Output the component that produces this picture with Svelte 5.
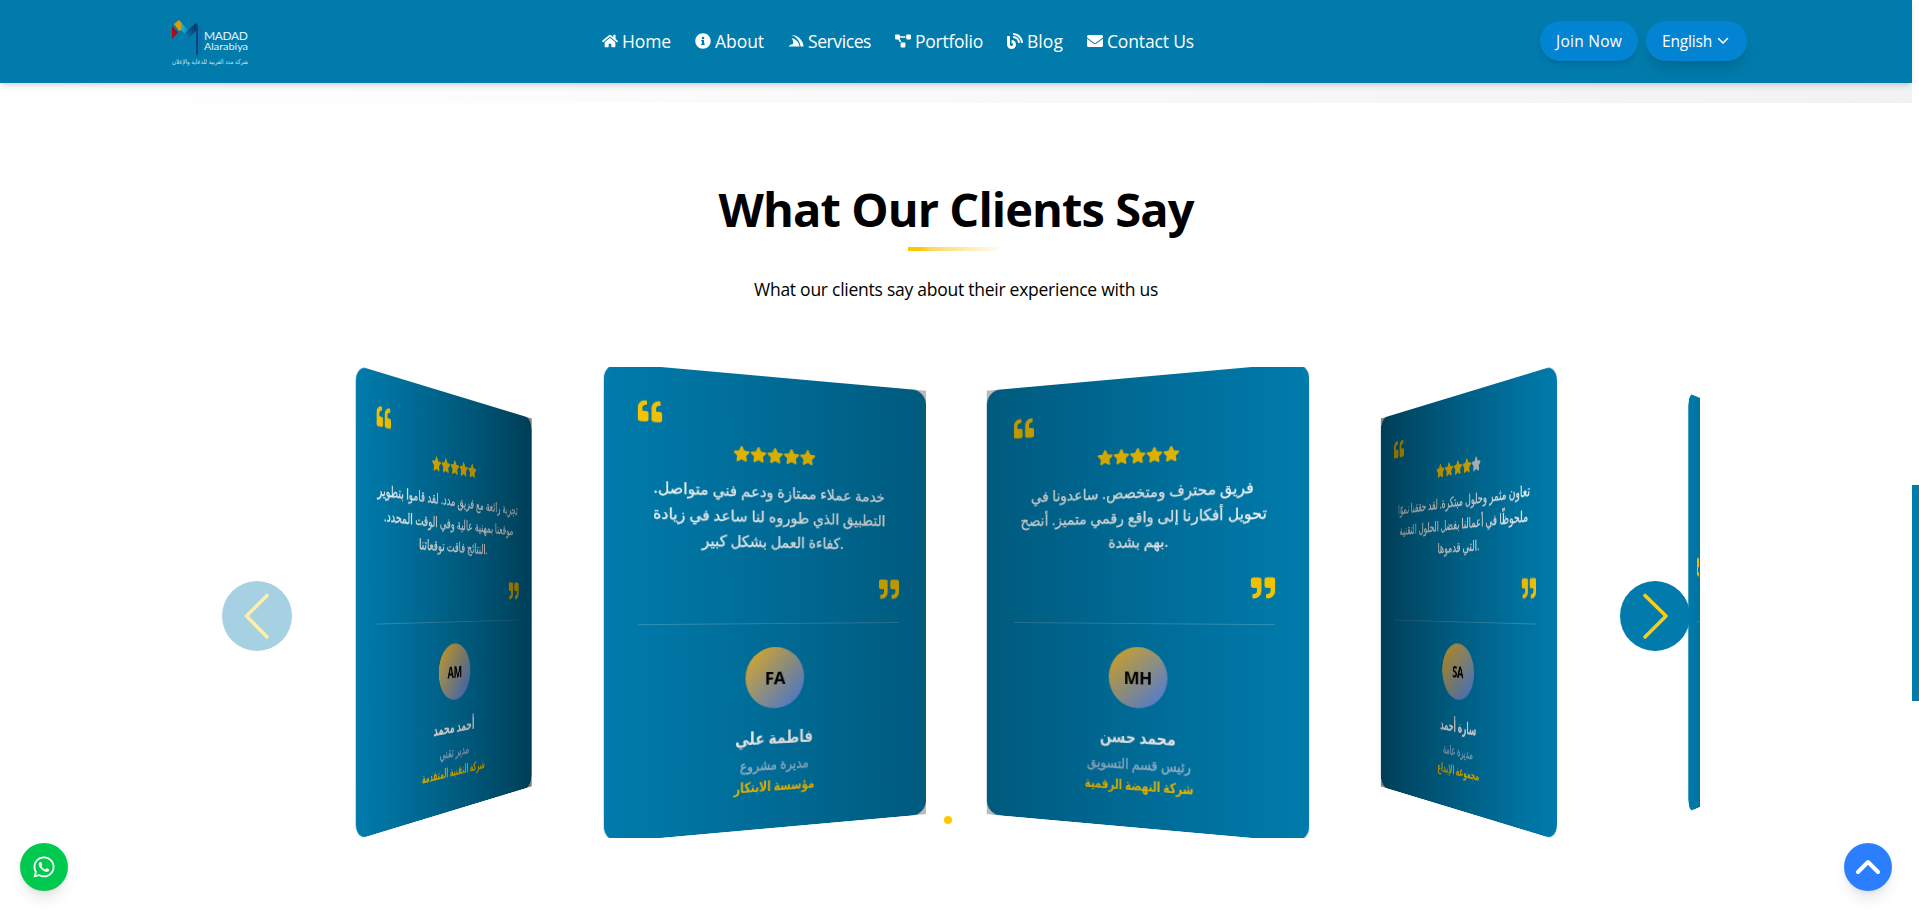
<script>
  const ICONS = {
    home: ['0 0 576 512', 'M280.37 148.26L96 300.11V464a16 16 0 0 0 16 16l112.06-.29a16 16 0 0 0 15.92-16V368a16 16 0 0 1 16-16h64a16 16 0 0 1 16 16v95.64a16 16 0 0 0 16 16.05L464 480a16 16 0 0 0 16-16V300L295.67 148.26a12.19 12.19 0 0 0-15.3 0zM571.6 251.47L488 182.56V44.05a12 12 0 0 0-12-12h-56a12 12 0 0 0-12 12v72.61L318.47 43a48 48 0 0 0-61 0L4.34 251.47a12 12 0 0 0-1.6 16.9l25.5 31A12 12 0 0 0 45.15 301l235.22-193.74a12.19 12.19 0 0 1 15.3 0L530.9 301a12 12 0 0 0 16.9-1.6l25.5-31a12 12 0 0 0-1.7-16.93z'],
    info: ['0 0 512 512', 'M256 8C119.043 8 8 119.083 8 256c0 136.997 111.043 248 248 248s248-111.003 248-248C504 119.083 392.957 8 256 8zm0 110c23.196 0 42 18.804 42 42s-18.804 42-42 42-42-18.804-42-42 18.804-42 42-42zm56 254c0 6.627-5.373 12-12 12h-88c-6.627 0-12-5.373-12-12v-24c0-6.627 5.373-12 12-12h12v-64h-12c-6.627 0-12-5.373-12-12v-24c0-6.627 5.373-12 12-12h64c6.627 0 12 5.373 12 12v100h12c6.627 0 12 5.373 12 12v24z'],
    stack: ['0 0 512 512', 'M112 64C330 70 480 230 500 432H400C380 250 270 120 112 64zM112 160C260 200 350 290 372 432H24C34 392 90 368 150 358C185 320 170 235 112 160z'],
    diagram: ['0 0 640 512', 'M384 320H256c-17.67 0-32 14.33-32 32v128c0 17.67 14.33 32 32 32h128c17.67 0 32-14.33 32-32V352c0-17.67-14.33-32-32-32zM192 32c0-17.67-14.33-32-32-32H32C14.33 0 0 14.33 0 32v128c0 17.67 14.33 32 32 32h95.72l73.16 128.04C211.98 300.98 232.4 288 256 288h.28L192 175.51V128h224V64H192V32zM608 0H480c-17.67 0-32 14.33-32 32v128c0 17.67 14.33 32 32 32h128c17.67 0 32-14.33 32-32V32c0-17.67-14.33-32-32-32z'],
    blog: ['0 0 512 512', 'M172.2 226.8c-14.6-2.9-28.2 8.9-28.2 23.8V301c0 10.2 7.1 18.4 16.7 22 18.2 6.8 31.3 24.4 31.3 45 0 26.5-21.5 48-48 48s-48-21.5-48-48V120c0-13.3-10.7-24-24-24H24c-13.3 0-24 10.7-24 24v248c0 89.5 82.1 160.2 175 140.7 54.4-11.4 98.3-55.4 109.7-109.7 17.4-82.9-37-157.2-112.5-172.2zM209 0c-9.2-.5-17 6.8-17 16v31.6c0 8.5 6.6 15.5 15 15.9 129.4 7 233.4 112 240.9 241.5.5 8.4 7.5 15 15.9 15h32.1c9.2 0 16.5-7.8 16-17C503.4 139.8 372.2 8.6 209 0zm.3 96c-9.3-.7-17.3 6.7-17.3 16.1v32.1c0 8.4 6.5 15.3 14.8 15.9 76.8 6.3 138 68.2 144.9 145.2.8 8.3 7.6 14.7 15.9 14.7h32.2c9.3 0 16.8-8 16.1-17.3-8.4-110.1-96.5-198.2-206.6-206.7z'],
    mail: ['0 0 512 512', 'M502.3 190.8c3.9-3.1 9.7-.2 9.7 4.7V400c0 26.5-21.5 48-48 48H48c-26.5 0-48-21.5-48-48V195.6c0-5 5.7-7.8 9.7-4.7 22.4 17.4 52.1 39.5 154.1 113.6 21.1 15.4 56.7 47.8 92.2 47.6 35.7.3 72-32.8 92.3-47.6 102-74.1 131.6-96.3 154-113.7zM256 320c23.2.4 56.6-29.2 73.4-41.4 132.7-96.3 142.8-104.7 173.4-128.7 5.8-4.5 9.2-11.5 9.2-18.9v-19c0-26.5-21.5-48-48-48H48c-26.5 0-48 21.5-48 48v19c0 7.4 3.4 14.3 9.2 18.9 30.6 23.9 40.7 32.4 173.4 128.7 16.8 12.2 50.2 41.8 73.4 41.4z'],
    star: ['0 0 576 512', 'M259.3 17.8L194 150.2 47.9 171.5c-26.2 3.8-36.7 36.1-17.7 54.6l105.7 103-25 145.5c-4.5 26.3 23.2 46 46.4 33.7L288 439.6l130.7 68.7c23.2 12.2 50.9-7.4 46.4-33.7l-25-145.5 105.7-103c19-18.5 8.5-50.8-17.7-54.6L382 150.2 316.7 17.8c-11.7-23.6-45.6-23.9-57.4 0z'],
    quote: ['0 0 512 512', 'M464 256h-80v-64c0-35.3 28.7-64 64-64h8c13.3 0 24-10.7 24-24V56c0-13.3-10.7-24-24-24h-8c-88.4 0-160 71.6-160 160v240c0 26.5 21.5 48 48 48h128c26.5 0 48-21.5 48-48V304c0-26.5-21.5-48-48-48zm-288 0H96v-64c0-35.3 28.7-64 64-64h8c13.3 0 24-10.7 24-24V56c0-13.3-10.7-24-24-24h-8C71.6 32 0 103.6 0 192v240c0 26.5 21.5 48 48 48h128c26.5 0 48-21.5 48-48V304c0-26.5-21.5-48-48-48z'],
    whatsapp: ['0 0 448 512', 'M380.9 97.1C339 55.1 283.2 32 223.9 32c-122.4 0-222 99.6-222 222 0 39.1 10.2 77.3 29.6 111L0 480l117.7-30.9c32.4 17.7 68.9 27 106.1 27h.1c122.3 0 224.1-99.6 224.1-222 0-59.3-25.2-115-67.1-157zm-157 341.6c-33.2 0-65.7-8.9-94-25.7l-6.7-4-69.8 18.3L72 359.2l-4.4-7c-18.5-29.4-28.2-63.3-28.2-98.2 0-101.7 82.8-184.5 184.6-184.5 49.3 0 95.6 19.2 130.4 54.1 34.8 34.9 56.2 81.2 56.1 130.5 0 101.8-84.9 184.6-186.6 184.6zm101.2-138.2c-5.5-2.8-32.8-16.2-37.9-18-5.1-1.9-8.8-2.8-12.5 2.8-3.7 5.6-14.3 18-17.6 21.8-3.2 3.7-6.5 4.2-12 1.4-32.6-16.3-54-29.1-75.5-66-5.7-9.8 5.7-9.1 16.3-30.3 1.8-3.7.9-6.9-.5-9.7-1.4-2.8-12.5-30.1-17.1-41.2-4.5-10.8-9.1-9.3-12.5-9.5-3.2-.2-6.9-.2-10.6-.2-3.7 0-9.7 1.4-14.8 6.9-5.1 5.6-19.4 19-19.4 46.3 0 27.3 19.9 53.7 22.6 57.4 2.8 3.7 39.1 59.7 94.8 83.8 35.2 15.2 49 16.5 66.6 13.9 10.7-1.6 32.8-13.4 37.4-26.4 4.6-13 4.6-24.1 3.2-26.4-1.3-2.5-5-3.9-10.5-6.6z'],
  };

  // each entry: icon, label, label width
  const nav = [
    ['home', 'Home', 49],
    ['info', 'About', 49],
    ['stack', 'Services', 63],
    ['diagram', 'Portfolio', 68],
    ['blog', 'Blog', 36],
    ['mail', 'Contact Us', 87],
  ];

  const clients = [
    {
      initials: 'AM', stars: 5,
      lines: [['تجربة رائعة مع فريق مدد. لقد قاموا بتطوير', 280], ['موقعنا بمهنية عالية وفي الوقت المحدد.', 259], ['النتائج فاقت توقعاتنا.', 138]],
      name: ['أحمد محمد', 83], role: ['مدير تقني', 60], company: ['شركة التقنية المتقدمة', 127],
    },
    {
      initials: 'FA', stars: 5,
      lines: [['خدمة عملاء ممتازة ودعم فني متواصل.', 252], ['التطبيق الذي طوروه لنا ساعد في زيادة', 253], ['كفاءة العمل بشكل كبير.', 154]],
      name: ['فاطمة علي', 85], role: ['مديرة مشروع', 75], company: ['مؤسسة الابتكار', 88],
    },
    {
      initials: 'MH', stars: 5,
      lines: [['فريق محترف ومتخصص. ساعدونا في', 242], ['تحويل أفكارنا إلى واقع رقمي متميز. أنصح', 268], ['بهم بشدة.', 65]],
      name: ['محمد حسن', 83], role: ['رئيس قسم التسويق', 113], company: ['شركة النهضة الرقمية', 118],
    },
    {
      initials: 'SA', stars: 4,
      lines: [['تعاون مثمر وحلول مبتكرة. لقد حققنا نموًا', 264], ['ملحوظًا في أعمالنا بفضل الحلول التقنية', 257], ['التي قدموها.', 84]],
      name: ['سارة أحمد', 73], role: ['مديرة عامة', 60], company: ['مجموعة الإبداع', 84],
    },
    {
      initials: 'KA', stars: 5,
      lines: [['خدمة احترافية وسرعة في التنفيذ.', 240], ['فريق متعاون ومبدع.', 140]],
      name: ['خالد علي', 73], role: ['مدير عام', 60], company: ['شركة الأفق', 84],
    },
  ];

  // coverflow: 50deg of rotation and 100px of depth per slide away from the centre
  const SLIDE = 349.5;
  const PITCH = SLIDE + 30;
  const cover = (i) => {
    const m = ((1.5 - i) * PITCH) / SLIDE;
    return {
      transform: `translate3d(0, 0, ${-100 * Math.abs(m)}px) rotateY(${50 * m}deg)`,
      left: Math.min(1, Math.max(0, m)),
      right: Math.min(1, Math.max(0, -m)),
    };
  };

  // spreads letters evenly so a label takes the given width
  function track(node, width) {
    const natural = node.getBoundingClientRect().width;
    node.style.letterSpacing = `${(width - natural) / node.textContent.length}px`;
  }
  // joined script keeps its ligatures, so it is condensed as a whole
  function condense(node, width) {
    node.style.transform = `scaleX(${width / node.offsetWidth})`;
  }
</script>

{#snippet icon(name, cls)}
  <svg class={cls} viewBox={ICONS[name][0]} fill="currentColor" aria-hidden="true"><path d={ICONS[name][1]} /></svg>
{/snippet}

<div class="screen">
  <div class="page">
    <header>
      <a class="logo" href="#top" aria-label="Madad Alarabiya">
        <svg width="80" height="50" viewBox="0 0 80 50">
          <defs>
            <linearGradient id="fold" x1="0" y1="0" x2="1" y2="0"><stop offset="0" stop-color="#28b7cf" /><stop offset="1" stop-color="#0079ab" /></linearGradient>
            <linearGradient id="arm" x1="1" y1="0" x2="0" y2="1"><stop offset="0" stop-color="#06285e" /><stop offset="1" stop-color="#0a86b5" /></linearGradient>
          </defs>
          <path d="M1 8v13l6-6.500z" fill="#b00710" />
          <path d="M3 6l5-4 3 3.500-1 6.500-2 1z" fill="#dc9d0c" />
          <path d="M10.500 5l9 9-2.500 5-7-7z" fill="url(#fold)" />
          <path d="M14 15L25 5v8l-8 8z" fill="url(#arm)" />
          <path d="M25 5v33l2-2V7z" fill="#07458a" />
          <path d="M27 7l4 3v23l-4 4z" fill="#0b70a6" />
          <text x="33" y="22" textLength="44" font-size="12" class="word">MADAD</text>
          <text x="33" y="32" textLength="44" lengthAdjust="spacingAndGlyphs" font-size="9.500" class="word">Alarabiya</text>
          <text x="39" y="46" textLength="76" lengthAdjust="spacingAndGlyphs" text-anchor="middle" font-size="6.5" class="word ar">شركة مدد العربية للدعاية والإعلان</text>
        </svg>
      </a>
      <nav>
        {#each nav as [name, label, width]}
          <a href="#{name}">{@render icon(name, 'ni')}<span use:track={width}>{label}</span></a>
        {/each}
      </nav>
      <div class="actions">
        <button class="join"><span use:track={66}>Join Now</span></button>
        <button class="lang"><span use:track={50}>English</span>
          <svg width="12" height="8" viewBox="0 0 12 8" fill="none" stroke="#fff" stroke-width="1.6" stroke-linecap="round" stroke-linejoin="round"><path d="M1.5 1.5L6 6l4.500-4.500" /></svg>
        </button>
      </div>
    </header>
    <div class="strip"></div>
    <main>
      <h1><span use:track={475}>What Our Clients Say</span></h1>
      <div class="rule"></div>
      <p class="sub"><span use:track={404}>What our clients say about their experience with us</span></p>

      <div class="swiper">
        <div class="wrapper">
          {#each clients as c, i}
            {@const s = cover(i)}
            <div class="slide" style:transform={s.transform} style:z-index={i === 1 || i === 2 ? 1 : 0}>
              <article>
                {@render icon('quote', 'q')}
                <div class="stars">
                  {#each Array(5) as _, n}<span class:off={n >= c.stars}>{@render icon('star', 'st')}</span>{/each}
                </div>
                <div class="quote">
                  {#each c.lines as [text, w], n}
                    <div dir={n < c.lines.length - 1 ? 'rtl' : 'ltr'}><span use:condense={w}>{text}</span></div>
                  {/each}
                </div>
                {@render icon('quote', 'q close')}
                <footer>
                  <div class="avatar">{c.initials}</div>
                  <div class="name"><span use:condense={c.name[1]}>{c.name[0]}</span></div>
                  <div class="role"><span use:condense={c.role[1]}>{c.role[0]}</span></div>
                  <div class="company"><span use:condense={c.company[1]}>{c.company[0]}</span></div>
                </footer>
              </article>
              <div class="shade l" style:opacity={s.left}></div>
              <div class="shade r" style:opacity={s.right}></div>
            </div>
          {/each}
        </div>
        <button class="arrow prev" aria-label="Previous"><svg width="70" height="70" viewBox="0 0 70 70"><path d="M45 14.500L24.500 35l20.500 21" /></svg></button>
        <button class="arrow next" aria-label="Next"><svg width="70" height="70" viewBox="0 0 70 70"><path d="M25 14.500L46 35l-21 21" /></svg></button>
        <i class="dot"></i>
      </div>
    </main>
    <a class="fab wa" href="#chat" aria-label="WhatsApp">{@render icon('whatsapp', 'wi')}</a>
    <button class="fab up" aria-label="Back to top"><svg width="48" height="48" viewBox="0 0 48 48" fill="none" stroke="#fff" stroke-width="4" stroke-linecap="round" stroke-linejoin="round"><path d="M14 29L24 19l10 10" /></svg></button>
  </div>
  <div class="scrollbar"><div class="thumb"></div></div>
</div>

<style>
  :global(body) { margin: 0; overflow: hidden; }
  .screen { display: flex; width: 1919px; height: 910px; overflow: hidden; background: #fff; font-family: "Open Sans", "Noto Sans", "DejaVu Sans", sans-serif; color: #000; }
  .page { position: relative; width: 1912px; height: 910px; }
  .scrollbar { width: 7px; background: #fff; }
  .thumb { height: 216px; margin-top: 485px; background: #007bac; }
  button { border: 0; padding: 0; font: inherit; cursor: pointer; }
  a { color: inherit; text-decoration: none; }

  header { position: relative; z-index: 5; box-sizing: border-box; display: flex; align-items: center; height: 83px; padding-bottom: 1px; background: #007bac; color: #fff; box-shadow: 0 4px 6px -1px rgba(0,0,0,.12), 0 2px 4px -2px rgba(0,0,0,.12); }
  .logo { display: block; margin-left: 171px; margin-top: 4px; width: 80px; height: 50px; }
  .logo svg { display: block; overflow: visible; }
  .word { fill: #e4f1f6; font-family: Lato, sans-serif; }
  .ar { font-family: "DejaVu Sans", sans-serif; direction: rtl; fill: #cfe5ee; }
  nav { display: flex; gap: 24px; margin-left: 351px; }
  nav a { display: flex; align-items: center; font-size: 17.5px; font-weight: 500; line-height: 26px; white-space: nowrap; gap: 4px; }
  :global(.ni) { width: 16px; height: 16px; display: block; }
  .actions { display: flex; gap: 8px; margin-left: auto; margin-right: 165px; }
  .actions button { display: flex; align-items: center; justify-content: center; height: 40px; border-radius: 20px; background: #0284d3; color: #fff; font-size: 15.5px; font-weight: 500; white-space: nowrap; }
  .actions span { margin-top: -1px; }
  .join { width: 98px; box-shadow: 0 4px 6px -1px rgba(0,0,0,.12), 0 2px 4px -2px rgba(0,0,0,.1); }
  .actions .lang { box-sizing: border-box; width: 101px; padding-right: 2px; gap: 5px; box-shadow: 0 10px 15px -3px rgba(0,0,0,.12), 0 4px 6px -4px rgba(0,0,0,.12); }
  .strip { height: 20px; background: linear-gradient(90deg, #fff, #f8f9fa 50%, #f1f2f4); }

  main { display: flex; flex-direction: column; align-items: center; }
  h1 { margin: 73px 0 0; height: 71px; font-size: 47px; line-height: 66px; font-weight: 700; white-space: nowrap; }
  h1 span, .sub span { display: inline-block; }
  .rule { width: 96px; height: 4px; background: linear-gradient(90deg, #fcc800 12%, #fdd964 25%, rgba(253,217,100,0)); }
  .sub { margin: 24px 0 0; height: 92px; font-size: 17.500px; line-height: 29px; white-space: nowrap; }

  .swiper { position: relative; width: 1488px; height: 471px; overflow: hidden; perspective: 1200px; }
  .wrapper { display: flex; gap: 30px; height: 471px; transform-style: preserve-3d; }
  .slide { position: relative; flex: none; width: 349.5px; height: 471px; }
  article { box-sizing: border-box; height: 100%; padding: 33px 33px 31px; border-radius: 16px; background: #007bac; color: #fff; display: flex; flex-direction: column; }
  :global(.q) { display: block; flex: none; width: 24px; height: 24px; color: #fcc800; }
  :global(.q.close) { align-self: flex-end; transform: rotate(180deg); }
  .stars { display: flex; justify-content: center; margin: 16px 0 16px; color: #fcc800; height: 18px; }
  .stars .off { color: #d1d5dc; }
  :global(.st) { display: block; width: 18px; height: 18px; }
  .quote { text-align: center; font-size: 16px; line-height: 26px; margin-bottom: 24px; -webkit-text-stroke: .25px currentColor; }
  .quote div { display: flex; justify-content: center; height: 26px; }
  .quote span, .name span, .role span, .company span { display: inline-block; white-space: nowrap; flex: none; }
  footer { display: flex; flex-direction: column; align-items: center; margin-top: auto; padding: 24px 0 2px; border-top: 1px solid rgba(255,255,255,.2); }
  .avatar { display: flex; align-items: center; justify-content: center; width: 64px; height: 64px; border-radius: 50%; background: linear-gradient(135deg, #fcc020, #4a86ff); color: #000; font-size: 18.500px; line-height: 26px; font-weight: 700; letter-spacing: -.5px; }
  .name { margin-top: 16px; height: 32px; line-height: 28px; font-size: 18px; font-weight: 700; }
  .role { height: 22px; line-height: 22px; font-size: 14.500px; color: #a5c3e0; -webkit-text-stroke: .3px currentColor; }
  .company { height: 22px; line-height: 22px; font-size: 14.500px; font-weight: 600; color: #fcc800; }
  .shade { position: absolute; inset: 0; }
  .l { background: linear-gradient(to left, rgba(0,0,0,.5), rgba(0,0,0,0)); }
  .r { background: linear-gradient(to right, rgba(0,0,0,.5), rgba(0,0,0,0)); }

  .arrow { position: absolute; z-index: 10; top: 214px; width: 70px; height: 70px; border-radius: 50%; background: #007bac; }
  .arrow svg { display: block; fill: none; stroke: #fbcb16; stroke-width: 3.600; stroke-linecap: round; stroke-linejoin: round; }
  .prev { left: 10px; opacity: .35; }
  .next { right: 10px; }
  .dot { position: absolute; z-index: 10; left: 732px; top: 449px; width: 8px; height: 8px; border-radius: 50%; background: #fcc800; }

  .fab { position: absolute; top: 843px; width: 48px; height: 48px; border-radius: 50%; display: flex; align-items: center; justify-content: center; color: #fff; box-shadow: 0 10px 15px -3px rgba(0,0,0,.1), 0 4px 6px -4px rgba(0,0,0,.1); }
  .wa { left: 20px; background: #00c950; }
  :global(.wi) { width: 24px; height: 24px; }
  .up { left: 1844px; background: #2b7fff; }
</style>
